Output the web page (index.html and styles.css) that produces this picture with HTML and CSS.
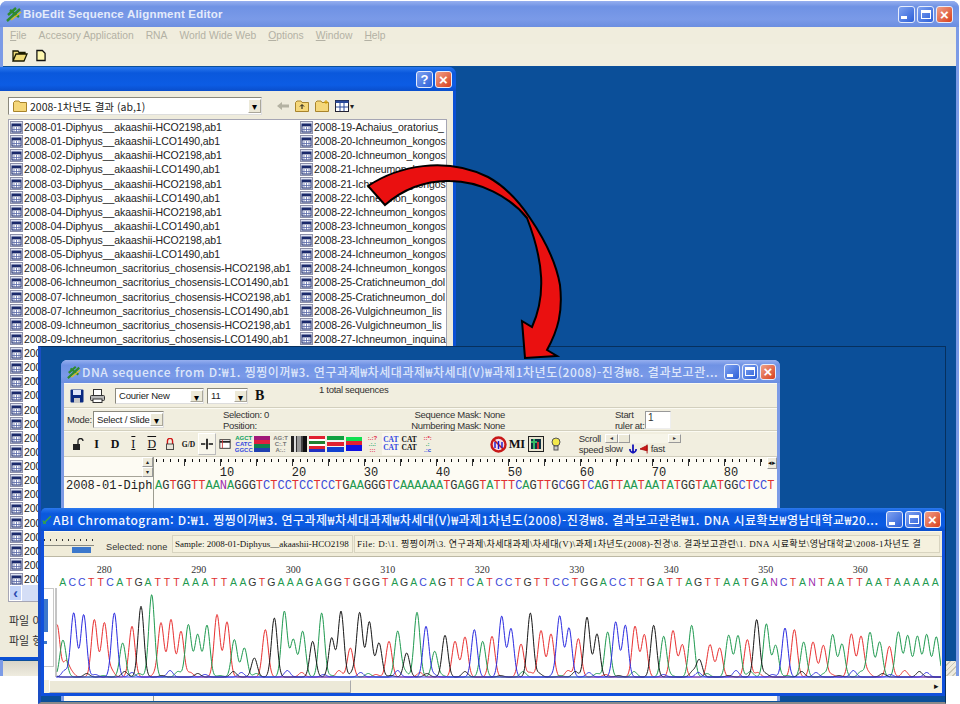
FILE: index.html
```html
<!DOCTYPE html>
<html lang="ko">
<head>
<meta charset="utf-8">
<title>BioEdit</title>
<link rel="stylesheet" href="styles.css">
</head>
<body>
<svg class="defs" width="0" height="0">
  <symbol id="abf" viewBox="0 0 13 13">
    <rect x=".5" y=".5" width="12" height="12" fill="#dfe3f2" stroke="#8c8fa8"/>
    <rect x="2" y="3" width="9" height="8" fill="#fff" stroke="#1b2a6b"/>
    <rect x="2" y="3" width="9" height="2.4" fill="#1b2a6b"/>
    <path d="M4 6v5M6.5 6v5M9 6v5M2 8.5h9" stroke="#5a6aa8" stroke-width=".8"/>
  </symbol>
  <symbol id="folder" viewBox="0 0 14 12">
    <path d="M.5 2.5 2 1h4l1 1.5h6.5v9H.5z" fill="#f5d77a" stroke="#a8842c"/>
  </symbol>
</svg>

<section class="win main">
  <header class="title t-pale">
    <svg class="appicon" viewBox="0 0 16 16"><path d="M1 15 14 3M4 4l9 7M2 9l8-7" stroke="#2e8b2e" stroke-width="2.4"/><path d="M5 14 15 6" stroke="#d9c01c" stroke-width="1.4"/></svg>
    <span class="ttext big">BioEdit Sequence Alignment Editor</span>
    <span class="caps">
      <span class="cap"><i class="g-min"></i></span><span class="cap"><i class="g-max"></i></span><span class="cap red">×</span>
    </span>
  </header>
  <nav class="menu">
    <span><u>F</u>ile</span><span>Accesory Application</span><span>RNA</span><span>World Wide Web</span><span><u>O</u>ptions</span><span><u>W</u>indow</span><span><u>H</u>elp</span>
  </nav>
  <div class="maintools">
    <svg class="mt1" viewBox="0 0 16 13"><path d="M1 12V2h5l1 1.500h6V5H4L1 12h11l3-7H4" fill="#f0dc78" stroke="#1a1a00" stroke-width="1.300"/></svg>
    <svg class="mt2" viewBox="0 0 11 13"><path d="M1 1h6l3 3v8H1z" fill="#fff8b0" stroke="#111" stroke-width="1.400"/></svg>
  </div>
  <div class="client"></div>
  <div class="status"><i class="grip"></i></div>
</section>

<section class="win dialog">
  <header class="title t-sat dlgtitle">
    <span class="caps"><span class="cap q">?</span><span class="cap red">×</span></span>
  </header>
  <div class="dlgbody">
    <div class="lookin">
      <div class="combo wide">
        <svg class="cfold"><use href="#folder"/></svg>
        <span class="ctext">2008-1차년도 결과 (ab,1)</span>
        <span class="drop">▾</span>
      </div>
      <svg class="nav-back" viewBox="0 0 12 10"><path d="M0 5l5-4v2.500h7v3H5V9z" fill="#b4b2a2"/></svg>
      <svg class="nav-ic" viewBox="0 0 14 12"><use href="#folder"/><path d="M7 9V5M5 6.500 7 4.500 9 6.500" stroke="#111" fill="none"/></svg>
      <svg class="nav-ic" viewBox="0 0 14 12"><use href="#folder"/><path d="M11 0v4M9 2h4" stroke="#d8a000"/></svg>
      <svg class="nav-ic" viewBox="0 0 14 12"><rect x=".5" y=".5" width="13" height="11" fill="#fff" stroke="#223"/><rect x=".5" y=".5" width="13" height="2.500" fill="#2a4a9a"/><path d="M5 3v8M9 3v8M1 7h12" stroke="#2a4a9a"/></svg>
      <span class="nav-dd">▾</span>
    </div>
    <div class="listbox">
      <div class="cols">
        <ul class="col c1">
          <li><svg><use href="#abf"/></svg>2008-01-Diphyus__akaashii-HCO2198,ab1</li>
          <li><svg><use href="#abf"/></svg>2008-01-Diphyus__akaashii-LCO1490,ab1</li>
          <li><svg><use href="#abf"/></svg>2008-02-Diphyus__akaashii-HCO2198,ab1</li>
          <li><svg><use href="#abf"/></svg>2008-02-Diphyus__akaashii-LCO1490,ab1</li>
          <li><svg><use href="#abf"/></svg>2008-03-Diphyus__akaashii-HCO2198,ab1</li>
          <li><svg><use href="#abf"/></svg>2008-03-Diphyus__akaashii-LCO1490,ab1</li>
          <li><svg><use href="#abf"/></svg>2008-04-Diphyus__akaashii-HCO2198,ab1</li>
          <li><svg><use href="#abf"/></svg>2008-04-Diphyus__akaashii-LCO1490,ab1</li>
          <li><svg><use href="#abf"/></svg>2008-05-Diphyus__akaashii-HCO2198,ab1</li>
          <li><svg><use href="#abf"/></svg>2008-05-Diphyus__akaashii-LCO1490,ab1</li>
          <li><svg><use href="#abf"/></svg>2008-06-Ichneumon_sacritorius_chosensis-HCO2198,ab1</li>
          <li><svg><use href="#abf"/></svg>2008-06-Ichneumon_sacritorius_chosensis-LCO1490,ab1</li>
          <li><svg><use href="#abf"/></svg>2008-07-Ichneumon_sacritorius_chosensis-HCO2198,ab1</li>
          <li><svg><use href="#abf"/></svg>2008-07-Ichneumon_sacritorius_chosensis-LCO1490,ab1</li>
          <li><svg><use href="#abf"/></svg>2008-09-Ichneumon_sacritorius_chosensis-HCO2198,ab1</li>
          <li><svg><use href="#abf"/></svg>2008-09-Ichneumon_sacritorius_chosensis-LCO1490,ab1</li>
          <li><svg><use href="#abf"/></svg>200</li><li><svg><use href="#abf"/></svg>200</li>
          <li><svg><use href="#abf"/></svg>200</li><li><svg><use href="#abf"/></svg>200</li>
          <li><svg><use href="#abf"/></svg>200</li><li><svg><use href="#abf"/></svg>200</li>
          <li><svg><use href="#abf"/></svg>200</li><li><svg><use href="#abf"/></svg>200</li>
          <li><svg><use href="#abf"/></svg>200</li><li><svg><use href="#abf"/></svg>200</li>
          <li><svg><use href="#abf"/></svg>200</li><li><svg><use href="#abf"/></svg>200</li>
          <li><svg><use href="#abf"/></svg>200</li><li><svg><use href="#abf"/></svg>200</li>
          <li><svg><use href="#abf"/></svg>200</li><li><svg><use href="#abf"/></svg>200</li>
          <li><svg><use href="#abf"/></svg>200</li>
        </ul>
        <ul class="col c2">
          <li><svg><use href="#abf"/></svg>2008-19-Achaius_oratorius_</li>
          <li><svg><use href="#abf"/></svg>2008-20-Ichneumon_kongos</li>
          <li><svg><use href="#abf"/></svg>2008-20-Ichneumon_kongos</li>
          <li><svg><use href="#abf"/></svg>2008-21-Ichneumon_kongos</li>
          <li><svg><use href="#abf"/></svg>2008-21-Ichneumon_kongos</li>
          <li><svg><use href="#abf"/></svg>2008-22-Ichneumon_kongos</li>
          <li><svg><use href="#abf"/></svg>2008-22-Ichneumon_kongos</li>
          <li><svg><use href="#abf"/></svg>2008-23-Ichneumon_kongos</li>
          <li><svg><use href="#abf"/></svg>2008-23-Ichneumon_kongos</li>
          <li><svg><use href="#abf"/></svg>2008-24-Ichneumon_kongos</li>
          <li><svg><use href="#abf"/></svg>2008-24-Ichneumon_kongos</li>
          <li><svg><use href="#abf"/></svg>2008-25-Cratichneumon_dol</li>
          <li><svg><use href="#abf"/></svg>2008-25-Cratichneumon_dol</li>
          <li><svg><use href="#abf"/></svg>2008-26-Vulgichneumon_lis</li>
          <li><svg><use href="#abf"/></svg>2008-26-Vulgichneumon_lis</li>
          <li><svg><use href="#abf"/></svg>2008-27-Ichneumon_inquina</li>
        </ul>
      </div>
      <div class="hscroll"><span class="hbtn">‹</span></div>
    </div>
    <p class="dlgfield first">파일 이</p>
    <p class="dlgfield">파일 형</p>
  </div>
</section>

<section class="mdi">
  <div class="win dna">
    <header class="title t-pale dnatitle">
      <svg class="appicon sm" viewBox="0 0 16 16"><path d="M1 15 14 3M4 4l9 7M2 9l8-7" stroke="#2e8b2e" stroke-width="2.400"/><path d="M5 14 15 6" stroke="#d9c01c" stroke-width="1.400"/></svg>
      <span class="ttext mid">DNA sequence from D:₩1. 찡찡이꺼₩3. 연구과제₩차세대과제₩차세대(V)₩과제1차년도(2008)-진경₩8. 결과보고관...</span>
      <span class="caps"><span class="cap"><i class="g-min"></i></span><span class="cap"><i class="g-max"></i></span><span class="cap red">×</span></span>
    </header>
    <div class="row r1">
      <svg class="save" viewBox="0 0 14 14"><rect x=".5" y=".5" width="13" height="13" rx="1" fill="#0a2a80"/><rect x="3" y="1" width="8" height="5" fill="#dfe6f8"/><rect x="4" y="9" width="6" height="5" fill="#c8c8c8"/></svg>
      <svg class="print" viewBox="0 0 15 14"><rect x="3.500" y=".5" width="8" height="6" fill="#fff" stroke="#333"/><rect x=".5" y="6.500" width="14" height="5" rx="1" fill="#b8b8b8" stroke="#333"/><rect x="3" y="10" width="9" height="3.500" fill="#fff" stroke="#333"/></svg>
      <div class="combo font"><span class="ctext sm">Courier New</span><span class="drop">▾</span></div>
      <div class="combo size"><span class="ctext sm">11</span><span class="drop">▾</span></div>
      <strong class="bold">B</strong>
      <span class="total">1 total sequences</span>
    </div>
    <div class="row r2">
      <span class="mode">Mode:</span>
      <div class="combo modesel"><span class="ctext sm">Select / Slide</span><span class="drop">▾</span></div>
      <div class="info sel"><span>Selection: 0</span><span>Position:</span></div>
      <div class="info mask"><span>Sequence Mask: None</span><span>Numbering Mask: None</span></div>
      <div class="info start"><span>Start</span><span>ruler at:</span></div>
      <span class="rulerin">1</span>
    </div>
    <div class="row r3">
      <span class="slot"><svg class="i12" viewBox="0 0 12 12"><rect x="1" y="6" width="7" height="6" fill="#222"/><path d="M6 6V3a2.500 2.500 0 0 1 5 0" fill="none" stroke="#222" stroke-width="1.300"/></svg></span>
      <span class="slot serif">I</span>
      <span class="slot serif">D</span>
      <span class="slot serif lined">I</span>
      <span class="slot serif lined">D</span>
      <span class="slot"><svg class="i12" viewBox="0 0 12 14"><path d="M3 7V3.500a3 3 0 0 1 6 0V7" fill="none" stroke="#d01818" stroke-width="1.600"/><rect x="2" y="7" width="8" height="6.500" fill="#e8e4d8" stroke="#333"/></svg></span>
      <span class="slot serif gd">G/D</span>
      <span class="slot raised"><svg class="i12" viewBox="0 0 14 12"><path d="M7 0v12" stroke="#111" stroke-width="2"/><path d="M0 6h5M9 6h5" stroke="#111" stroke-width="2"/></svg></span>
      <span class="slot"><svg class="i12" viewBox="0 0 14 12"><rect x="1" y="1" width="12" height="10" fill="#fff" stroke="#222"/><path d="M1 3.500h12" stroke="#222" stroke-width="2"/><path d="M4 1v10" stroke="#c33"/></svg></span>
      <span class="slot sw tcol"><b class="cg">AGCT</b><b class="cb">CATC</b><b class="cb">GGCC</b></span>
      <span class="slot sw"><i class="blocks b-a"></i></span>
      <span class="slot sw tcol gry"><b>AG:T</b><b>C:.T</b><b>A:.:</b></span>
      <span class="slot sw"><i class="blocks b-grad"></i></span>
      <span class="slot sw"><i class="blocks b-b"></i></span>
      <span class="slot sw"><i class="blocks b-c"></i></span>
      <span class="slot sw"><i class="blocks b-d"></i></span>
      <span class="slot sw tcol dots"><b class="cr">:.:?</b><b class="cg">.:.:</b><b class="cr">:::</b></span>
      <span class="slot sw tcol cat pinkbox"><b class="cb">CAT</b><b class="cb">CAT</b></span>
      <span class="slot sw tcol cat"><b>CAT</b><b>CAT</b></span>
      <span class="slot sw tcol dots"><b class="cr">::*:</b><b class="cg">.:</b><b class="cb">.:c</b></span>
      <svg class="noic" viewBox="0 0 17 17"><circle cx="8.500" cy="8.500" r="7" fill="#f4dbe6" stroke="#c81818" stroke-width="2.400"/><path d="M3.500 3.500l10 10" stroke="#c81818" stroke-width="1.600"/><path d="M5 12V6M8.500 13V5M12 12V6" stroke="#1a1ac8" stroke-width="1.400"/></svg>
      <strong class="mi">MI</strong>
      <svg class="gridic" viewBox="0 0 16 16"><rect x=".5" y=".5" width="15" height="15" fill="#e8e4d0" stroke="#222"/><rect x="3" y="3" width="10" height="10" fill="#134"/><path d="M3 6h6M6 3v10" stroke="#3b6" stroke-width="2"/><path d="M10 6v7" stroke="#c33" stroke-width="2"/></svg>
      <svg class="bulb" viewBox="0 0 10 14"><circle cx="5" cy="5" r="4" fill="#f2e84a" stroke="#555"/><rect x="3" y="9" width="4" height="4" fill="#ccc" stroke="#555"/></svg>
      <div class="info speed"><span>Scroll</span><span>speed</span></div>
      <div class="speedctl">
        <div class="slider"><i class="sbtn">◂</i><i class="sthumb"></i><i class="sbtn endb">▸</i></div>
        <div class="sl"><span>slow</span><svg viewBox="0 0 9 10"><path d="M4.500 0v10M1 5a3.500 4 0 0 0 7 0" stroke="#1414b8" stroke-width="2" fill="none"/></svg><svg viewBox="0 0 9 10"><path d="M8 0v10M8 1 0 5l8 2z" fill="#d01818" stroke="#a81010"/></svg><span>fast</span></div>
      </div>
    </div>
    <div class="seqarea">
      <div class="names">
        <div class="spin"><i>▴</i><i>▾</i></div>
        <div class="seqname">2008-01-Diph</div>
      </div>
      <div class="seqmain">
        <div class="ruler"><span>10</span><span>20</span><span>30</span><span>40</span><span>50</span><span>60</span><span>70</span><span>80</span></div>
        <div class="seq" data-seq="AGTGGTTAANAGGGTCTCCTCCTCCTGAAGGGTCAAAAAATGAGGTATTTCAGTTGCGGTCAGTTAATAATATGGTAATGGCTCCT"></div>
        <i class="rarrows">◂▸</i>
      </div>
    </div>
  </div>

  <div class="win abi">
    <header class="title t-sat abititle">
      <svg class="appicon tiny" viewBox="0 0 16 16"><path d="M2 14 14 2M1 9l5 5" stroke="#3aa83a" stroke-width="2"/></svg>
      <span class="ttext mid wide">ABI Chromatogram: D:₩1. 찡찡이꺼₩3. 연구과제₩차세대과제₩차세대(V)₩과제1차년도(2008)-진경₩8. 결과보고관련₩1. DNA 시료확보₩영남대학교₩20...</span>
      <span class="caps"><span class="cap"><i class="g-min"></i></span><span class="cap"><i class="g-max"></i></span><span class="cap red">×</span></span>
    </header>
    <div class="abiinfo">
      <div class="zoomer"><i class="zdots"></i><i class="zline"></i><i class="zbar"></i></div>
      <span class="selnone">Selected: none</span>
      <span class="box sample">Sample: 2008-01-Diphyus__akaashii-HCO2198</span>
      <span class="box file">File: D:\1. 찡찡이꺼\3. 연구과제\차세대과제\차세대(V)\과제1차년도(2008)-진경\8. 결과보고관련\1. DNA 시료확보\영남대학교\2008-1차년도 결</span>
    </div>
    <div class="chart">
      <div class="labels"><span>280</span><span>290</span><span>300</span><span>310</span><span>320</span><span>330</span><span>340</span><span>350</span><span>360</span></div>
      <div class="bases" data-seq="ACCTTCATGATTTAAATTAAGTGAAAGAGGTGGGTAGACAGTTCATCCTGTTCCTGGACCTTGATTAGTTAATGANCTANTAATTAATAAAAA"></div>
      <div class="plot">
        <svg id="trace" class="trace" viewBox="0 0 897 92"></svg>
        <div class="vslider"><i></i><b></b></div>
      </div>
    </div>
    <div class="abiscroll"><i class="thumb"></i><span class="rarrow">▸</span></div>
  </div>
</section>

<svg class="arrow" viewBox="0 0 960 704">
  <path d="M368 186C398 166 445 156 488 177C508 188 520 203 530 218C545 240 556 262 560 285C563 312 558 330 547 350L557 356L525 358L522 321L532 327C546 296 544 262 527 218C510 197 480 181 450 181C425 180 402 190 385 205Z" fill="#ea1010" stroke="#000" stroke-width="2" stroke-linejoin="miter"/>
</svg>
<script src="chroma.js"></script>
</body>
</html>
```

FILE: styles.css
```css
*{box-sizing:border-box}
html,body{margin:0;padding:0}
body{position:relative;width:960px;height:704px;overflow:hidden;background:#fff;font-family:"Liberation Sans","Noto Sans CJK KR",sans-serif;font-size:11px;color:#2c2c2c}
.defs{position:absolute}
ul{list-style:none;margin:0;padding:0}
p{margin:0}
i{font-style:normal}

.win{position:absolute;display:flex;flex-direction:column}
.title{display:flex;align-items:center;flex:none;color:#fff}
.t-pale{background:linear-gradient(#96afef,#6f92e4 22%,#7a9ae8 70%,#6b8ee0)}
.t-sat{background:linear-gradient(#2a78ee,#0a58dc 25%,#0c5ce4 75%,#0a4ecb)}
.ttext{white-space:nowrap;overflow:hidden;font-weight:700}
.big{font-size:11.500px;color:#e4ebfb;letter-spacing:.2px;margin-left:1px}
.mid{font-size:12px;color:#dde6fa;letter-spacing:.55px;font-family:"Noto Sans CJK KR","Liberation Sans",sans-serif;font-weight:500}
.caps{margin-left:auto;display:flex;gap:2px;flex:none}
.cap{width:17px;height:17px;border:1px solid #e6ecfb;border-radius:3px;background:linear-gradient(135deg,#7fa2f0,#2c5fd8);display:flex;align-items:center;justify-content:center;color:#fff;font-size:15px;font-weight:700;line-height:1}
.cap.red{background:linear-gradient(135deg,#f0a088,#d8401c)}
.cap.q{font-size:13px}
.g-min{width:6px;height:3px;background:#fff;margin:7px 5px 0 0}
.g-max{width:10px;height:9px;border:1px solid #fff;border-top-width:3px}
.appicon{width:16px;height:16px;flex:none}

/* main window */
.main{left:0;top:1px;width:959px;height:675px;background:#7c9be6;border-radius:7px 7px 0 0;padding:0 3px 0 3px}
.main>.title{height:26px;margin:0 -3px;padding:0 6px 0 6px;border-radius:7px 7px 0 0}
.menu{height:17px;background:#f0eddd;display:flex;gap:12px;padding-left:7px;align-items:center;color:#b3b1a4;font-size:10.300px;flex:none}
.menu span{white-space:nowrap}
.maintools{height:22px;background:#f1eedf;display:flex;align-items:center;gap:8px;padding-left:9px;flex:none}
.mt1{width:16px;height:13px}
.mt2{width:10px;height:13px}
.client{flex:1;background:#0b4f99;border-left:1px solid #0b4f99}
.status{height:15px;flex:none;background:linear-gradient(#d8d5c8,#efecdf);position:relative}
.grip{position:absolute;right:0;top:0;width:12px;height:15px;background:repeating-linear-gradient(135deg,#c8c5b5 0 1px,#eeebde 1px 4px)}

/* open dialog */
.dialog{left:0;top:67px;width:456px;height:593px;background:#0b50d4;border-radius:0 7px 0 0;padding:0 3px 3px 0}
.dlgtitle{height:24px;margin-right:-3px;padding-right:4px;border-radius:0 7px 0 0}
.dlgbody{flex:1;background:#eeebdc;padding:6px 5px 0 8px;display:flex;flex-direction:column}
.lookin{display:flex;align-items:center;height:18px;flex:none}
.combo{display:flex;align-items:center;background:#fff;border:1px solid #8a887c;border-right-color:#ddd;border-bottom-color:#ddd;position:relative;height:18px;flex:none;overflow:hidden}
.wide{width:254px}
.cfold{width:14px;height:12px;margin:0 3px 0 4px;flex:none}
.ctext{font-size:10.500px;font-family:"Noto Sans CJK KR","Liberation Sans",sans-serif;color:#222;white-space:nowrap}
.ctext.sm{font-size:9.500px;font-family:"Liberation Sans",sans-serif;padding-left:3px;letter-spacing:-.2px}
.drop{position:absolute;right:0;top:1px;bottom:1px;width:13px;background:#ece9d8;border:1px solid #aaa79a;border-top-color:#fff;border-left-color:#fff;color:#000;font-size:10px;line-height:13px;text-align:center}
.nav-back{width:12px;height:10px;margin-left:15px;flex:none}
.nav-ic{width:14px;height:12px;margin-left:6px;flex:none}
.nav-dd{font-size:8px;color:#222;margin-left:1px}
.listbox{margin-top:4px;height:483px;width:439px;background:#fff;border:1px solid #a6a6b4;display:flex;flex-direction:column;flex:none;overflow:hidden}
.cols{flex:1;display:flex;overflow:hidden}
.col li{height:14.130px;display:flex;align-items:center;white-space:nowrap;font-size:10.500px;letter-spacing:-.08px;color:#222}
.col svg{width:13px;height:13px;margin-right:1px;flex:none}
.c1{width:291px;flex:none;padding:0 0 0 1px}
.c2{flex:1;overflow:hidden}
.hscroll{height:16px;background:#d4def6;flex:none;display:flex}
.hbtn{width:13px;background:#c2d3f8;color:#2a4ab0;font-weight:700;text-align:center;line-height:14px;font-size:14px;border:1px solid #fff}
.dlgfield{font-family:"Noto Sans CJK KR",sans-serif;font-size:11px;color:#333;height:20px;line-height:20px;white-space:nowrap;margin-left:1px}
.dlgfield.first{margin-top:8px}

/* mdi in front */
.mdi{position:absolute;left:38px;top:346px;width:908px;height:358px;background:#0b4f99;border-top:1px solid #06305e;border-right:1px solid #06305e;border-left:3px solid #1a4ec4;border-bottom:2px solid #8a8a8a}

.dna{left:20px;top:13px;width:719px;height:341px;background:#f1eedf;border-radius:6px 6px 0 0;border:solid #7c9be6;border-width:0 3px}
.dnatitle{height:23px;margin:0 -3px;padding:0 4px 0 6px;border-radius:6px 6px 0 0}
.appicon.sm{width:14px;height:14px;margin-right:1px}
.dnatitle .ttext{flex:1}
.dnatitle .caps{margin-left:6px}
.dnatitle .cap{width:16px;height:16px}
.row{display:flex;align-items:center;flex:none;border-bottom:1px solid #d2cfbe;border-top:1px solid #fbfaf2;color:#333;font-size:9.500px;letter-spacing:-.3px}
.r1{height:25px}
.save{width:14px;height:14px;margin-left:6px}
.print{width:15px;height:14px;margin-left:6px}
.font{width:89px;height:16px;margin-left:10px}
.size{width:41px;height:16px;margin-left:3px}
.bold{font:700 14px "Liberation Serif",serif;color:#111;width:12px;margin-left:7px}
.total{margin-left:52px;align-self:flex-start;margin-top:0;white-space:nowrap}
.r2{height:23px}
.mode{width:26px;margin-left:3px}
.modesel{width:71px;height:17px}
.info{display:flex;flex-direction:column;line-height:11px;white-space:nowrap;flex:none}
.sel{margin-left:59px;width:120px}
.mask{margin-left:71px;width:91px;align-items:flex-end}
.start{margin-left:110px;width:30px}
.rulerin{width:26px;height:18px;background:#fff;border:1px solid #999;border-right-color:#eee;border-bottom-color:#eee;padding-left:2px;font-size:10px}
.r3{height:26px;padding-left:5px}
.slot{width:18.400px;height:22px;display:flex;align-items:center;justify-content:center;flex:none;color:#111;letter-spacing:0}
.i12{width:12px;height:12px}
.serif{font:700 12px "Liberation Serif",serif}
.lined{text-decoration:underline overline;font-weight:400}
.gd{font-size:7.500px;white-space:nowrap}
.raised{background:#f7f5ea;border:1px solid #fff;border-right-color:#bbb;border-bottom-color:#bbb}
.sw{padding:2px 1px}
.tcol{flex-direction:column;font:700 6px/6px "Liberation Sans",sans-serif;overflow:hidden}
.tcol b{display:block;white-space:nowrap}
.cat{font:700 7.500px/8px "Liberation Serif",serif}
.pinkbox{background:#f9f6ec}
.cg{color:#0ca060}.cb{color:#3048e0}.cr{color:#e02040}
.gry{color:#777}
.dots{font-size:6px}
.blocks{display:block;width:17px;height:16px}
.b-a{background:linear-gradient(#a01878 0 25%,#e02040 25% 50%,#108050 50% 75%,#2040b0 75%)}
.b-grad{background:linear-gradient(90deg,#222 0 20%,#ddd 20% 30%,#333 30% 40%,#999 40% 60%,#444 60% 75%,#111 75%)}
.b-b{background:linear-gradient(#e02030 0 20%,#fff 20% 30%,#208030 30% 50%,#fff 50% 60%,#e02030 60% 80%,#2030c0 80%)}
.b-c{background:linear-gradient(#10a040 0 25%,#f0f0f0 25% 35%,#e02030 35% 60%,#f0f0f0 60% 70%,#1040d0 70%)}
.b-d{background:linear-gradient(#10e050 0 30%,#e02030 30% 60%,#1010e0 60%);height:14px}
.noic{width:17px;height:17px;margin-left:53px;flex:none}
.mi{font:700 12.500px "Liberation Serif",serif;color:#111;margin-left:2px;width:17px;flex:none}
.gridic{width:16px;height:16px;margin-left:2px;flex:none}
.bulb{width:10px;height:14px;margin-left:7px;flex:none}
.speed{margin-left:18px;width:27px}
.speedctl{display:flex;flex-direction:column;margin-left:-1px;width:76px}
.slider{display:flex;height:9px;background:#f6f4e8;position:relative}
.sbtn{width:13px;height:9px;background:#f0eddf;border:1px solid #999;border-top-color:#fff;border-left-color:#fff;font-size:6px;line-height:7px;text-align:center}
.sthumb{width:12px;height:9px;background:#ece9d8;border:1px solid #999;border-top-color:#fff;border-left-color:#fff}
.endb{margin-left:auto}
.sl{display:flex;align-items:center;gap:3px;line-height:11px;height:11px}
.sl svg{width:8px;height:10px}
.sl span:first-child{margin-right:3px}
.seqarea{flex:1;background:#fdfbf3;display:flex;min-height:0}
.names{width:90px;flex:none;border-right:1px solid #9c9c90;position:relative}
.spin{height:20px;display:flex;flex-direction:column;align-items:flex-end;font-size:6px;line-height:10px;color:#222;border-bottom:1px solid #a6a498}
.spin i{width:11px;height:10px;background:#eeebdc;border:1px solid #fff;border-right-color:#999;border-bottom-color:#999;text-align:center;line-height:8px}
.seqname{font:12px/18px "Liberation Mono",monospace;color:#222;padding-left:2px}
.seqmain{flex:1;position:relative}
.ruler{height:20px;display:flex;padding-left:37px;font:12px/15px "Liberation Mono",monospace;color:#222;padding-top:9px;background:repeating-linear-gradient(90deg,#111 0 1px,transparent 1px 7.200px) 2px 2px/100% 3px no-repeat,repeating-linear-gradient(90deg,#333 0 1px,transparent 1px 36px) 30px 2px/100% 7px no-repeat}
.ruler span{width:72px;text-align:center;flex:none}
.seq{font:12px/18px "Liberation Mono",monospace;white-space:nowrap;padding-left:1px}
.rarrows{position:absolute;right:0;top:0;font-size:7px;background:#eeebdc;border:1px solid #fff;border-right-color:#999;border-bottom-color:#999;color:#111;line-height:10px}
.bA{color:#1f9a50}.bC{color:#3a4ad8}.bG{color:#333}.bT{color:#e03030}.bN{color:#a030b0}

/* ABI */
.abi{left:0;top:161px;width:904px;height:188px;background:#0f56d8;border:solid #1050dc;border-width:0 3px 3px;border-radius:5px 5px 0 0}
.abititle{height:23px;margin:0 -3px;padding:0 4px 0 1px;border-radius:5px 5px 0 0}
.tiny{width:10px;height:10px;margin-right:1px}
.mid.wide{flex:1;color:#f4f7ff;font-size:12px;letter-spacing:.46px}
.abititle .caps{margin-left:4px}
.abiinfo{height:26px;flex:none;background:#f0ecd9;display:flex;align-items:center;border-bottom:1px solid #bcb8a4;border-top:1px solid #fbf8ea}
.zoomer{width:50px;height:20px;flex:none;position:relative}
.zdots{position:absolute;left:0;top:5px;width:50px;height:2px;background:repeating-linear-gradient(90deg,#333 0 1px,transparent 1px 6px)}
.zline{position:absolute;left:0;top:11px;width:50px;height:1px;background:#8a8a80}
.zbar{position:absolute;left:28px;top:13px;width:19px;height:6px;background:#3c78cc}
.selnone{width:78px;margin-left:12px;font-size:9.200px;color:#333;white-space:nowrap;flex:none;padding-top:6px}
.box{height:18px;border:1px solid #d8d4c0;font:9px/16px "Liberation Serif","Noto Sans CJK KR",serif;white-space:nowrap;overflow:hidden;flex:none;padding-left:2px;color:#111}
.sample{width:181px;margin-left:-12px;background:#f5f1de}
.file{width:586px;margin-left:1px;background:#f5f1de;letter-spacing:.4px}
.chart{flex:1;min-height:0;background:#fff;display:flex;flex-direction:column;position:relative;border-right:2px solid #f5f1de}
.labels{height:19px;flex:none;display:flex;padding-left:13px;font:10px/25px "Liberation Serif",serif;color:#333}
.labels span{width:94.500px;flex:none;text-align:center}
.bases{display:grid;grid-template-columns:repeat(93,9.490px);margin-left:14px;height:12px;flex:none;font:10.500px/12px "Liberation Sans",sans-serif;text-align:center}
.plot{flex:1;min-height:0;position:relative}
.trace{display:block;width:897px;height:92px}
.vslider{position:absolute;left:0;top:0;width:10px;height:79px;background:#fff;border:1px solid #c8c8c8;border-left:0}
.vslider i{position:absolute;left:0;top:10px;width:4px;height:33px;background:#3c78cc}
.vslider b{position:absolute;left:0;top:52px;width:3px;height:3px;background:#3c78cc}
.abiscroll{height:13px;flex:none;background:#f5f1de;position:relative;display:flex;align-items:center}
.thumb{display:block;margin-left:5px;width:302px;height:13px;background:#ece9d8;border:1px solid #fff;border-right-color:#aaa;border-bottom-color:#aaa}
.rarrow{position:absolute;right:3px;top:0;font-size:9px;line-height:13px;color:#111}

.arrow{position:absolute;left:0;top:0;width:960px;height:704px;pointer-events:none}
```

FILE: chroma.js
```js
(function () {
  // Base-calling text: one coloured span per base.
  document.querySelectorAll('[data-seq]').forEach(function (el) {
    el.dataset.seq.split('').forEach(function (ch) {
      var s = document.createElement('span');
      s.className = 'b' + ch;
      s.textContent = ch;
      el.appendChild(s);
    });
  });

  // Called peaks: [x, top-y, channel] read off the trace, in 3x units.
  var left = [[168,360,'r'],[185,415,'g'],[195,470,'r'],[218,325,'b'],[248,330,'b'],[280,345,'r'],[310,355,'r'],[340,325,'b'],[365,415,'g'],[393,365,'r'],[420,305,'k'],[452,270,'g'],[480,355,'r'],[510,345,'r'],[540,380,'r'],[562,360,'g'],[590,390,'g'],[618,362,'g'],[648,330,'r'],[678,352,'r'],[700,405,'g'],[730,430,'g'],[760,460,'k'],[793,375,'r'],[820,340,'k'],[850,320,'g'],[877,405,'g'],[905,380,'g'],[935,410,'k'],[962,325,'g'],[992,400,'k'],[1020,320,'k'],[1048,430,'r'],[1076,325,'k'],[1105,352,'k'],[1134,415,'k'],[1164,410,'r'],[1190,380,'g'],[1217,445,'k'],[1248,323,'g'],[1275,365,'b'],[1301,440,'g'],[1332,392,'k'],[1362,410,'r'],[1392,397,'r'],[1420,375,'b']];
  var right = [[5,410,'g'],[33,395,'r'],[62,335,'b'],[90,372,'b'],[120,418,'r'],[148,325,'k'],[180,378,'r'],[210,388,'r'],[236,335,'b'],[264,370,'b'],[292,402,'r'],[318,338,'k'],[348,388,'k'],[380,382,'g'],[404,352,'b'],[433,362,'b'],[462,365,'r'],[490,390,'r'],[518,362,'k'],[548,395,'g'],[576,378,'r'],[604,420,'r'],[632,362,'g'],[655,465,'k'],[687,420,'r'],[716,430,'r'],[743,392,'g'],[771,393,'g'],[799,405,'r'],[827,345,'k'],[856,358,'g'],[884,422,'g'],[912,370,'b'],[940,375,'r'],[968,412,'g'],[996,412,'r'],[1027,422,'r'],[1055,390,'g'],[1083,418,'g'],[1111,388,'r'],[1140,395,'r'],[1167,383,'g'],[1196,412,'g'],[1225,425,'r'],[1252,382,'g'],[1280,393,'g'],[1309,395,'g'],[1337,390,'g'],[1366,397,'g']];

  var X0 = 43, Y0 = 588, BASE = 677;
  var peaks = left.map(function (p) { return [p[0] / 3, (517 - p[1]) / 3, p[2]]; })
    .concat(right.map(function (p) { return [p[0] / 3 + 480, (517 - p[1]) / 3, p[2]]; }));

  var colours = { r: '#e83030', g: '#1f9a50', b: '#2a2ae0', k: '#161616' };
  var names = ['r', 'g', 'b', 'k'];

  // Low background humps from the other channels under each peak.
  var humps = [];
  peaks.forEach(function (p, i) {
    var other = names[(i * 7 + 3) % 4];
    if (other !== p[2]) humps.push([p[0] + ((i * 5) % 7) - 3, 1.5 + (i * 11) % 6, other]);
  });
  var all = peaks.concat(humps);

  var svg = document.getElementById('trace');
  var NS = 'http://www.w3.org/2000/svg';
  names.forEach(function (ch) {
    var list = all.filter(function (p) { return p[2] === ch; });
    var d = '';
    for (var x = 56; x <= 940; x += 0.5) {
      var h = 0;
      list.forEach(function (p) {
        var dx = x - p[0];
        if (Math.abs(dx) < 14) h += p[1] * Math.exp(-dx * dx / (2 * 2.9 * 2.9));
      });
      d += (d ? 'L' : 'M') + (x - X0).toFixed(1) + ' ' + (BASE - h - Y0).toFixed(1);
    }
    var path = document.createElementNS(NS, 'path');
    path.setAttribute('d', d);
    path.setAttribute('fill', 'none');
    path.setAttribute('stroke', colours[ch]);
    path.setAttribute('stroke-width', '1');
    svg.appendChild(path);
  });
  var axis = document.createElementNS(NS, 'path');
  axis.setAttribute('d', 'M12 0V' + (BASE - Y0));
  axis.setAttribute('fill', 'none');
  axis.setAttribute('stroke', '#8a8a8a');
  svg.appendChild(axis);
  var base = document.createElementNS(NS, 'path');
  base.setAttribute('d', 'M12 ' + (BASE - Y0) + 'H897');
  base.setAttribute('fill', 'none');
  base.setAttribute('stroke', '#3a3ae8');
  svg.appendChild(base);
})();
```
